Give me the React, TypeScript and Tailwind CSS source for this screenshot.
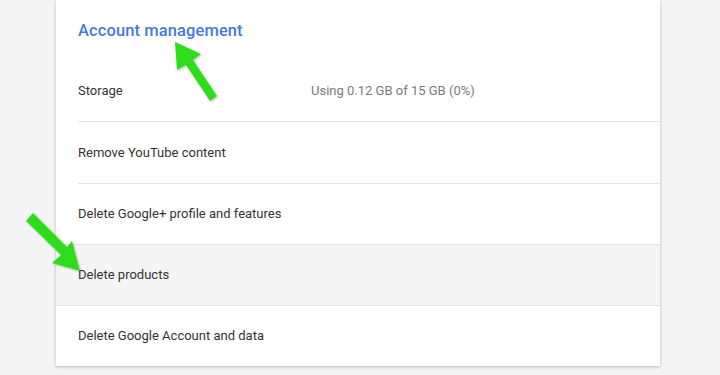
import React from "react";

export default function App() {
  const font = { fontFamily: "Roboto, 'Liberation Sans', Arial, sans-serif" };
  return (
    <div className="relative w-[720px] h-[375px] bg-[#f4f4f5] overflow-hidden" style={font}>
      <div className="ml-[56px] w-[604px] h-[366px] bg-white shadow-[0_1px_3px_rgba(0,0,0,0.25)] flex flex-col">
        <div className="h-[60px] flex items-center pl-[22px] pt-[3px]">
          <span className="text-[16.5px] font-medium text-[#4479dd] tracking-[0.1px]">Account management</span>
        </div>
        <div className="ml-[22px] h-[61px] flex items-center text-[13px]">
          <span className="w-[233px] text-[#333]">Storage</span>
          <span className="text-[#7a7a7a]">Using 0.12 GB of 15 GB (0%)</span>
        </div>
        <div className="ml-[22px] h-[62px] border-t border-[#e3e3e3] flex items-center text-[13px] text-[#333]">
          Remove YouTube content
        </div>
        <div className="ml-[22px] h-[61px] border-t border-[#e3e3e3] flex items-center text-[13px] text-[#333]">
          Delete Google+ profile and features
        </div>
        <div className="h-[62px] border-y border-[#e3e3e3] bg-[#f5f5f6] pl-[22px] flex items-center text-[13px] text-[#333]">
          Delete products
        </div>
        <div className="h-[60px] pl-[22px] flex items-center text-[13px] text-[#333]">
          Delete Google Account and data
        </div>
      </div>
      <svg className="absolute left-0 top-0 pointer-events-none" width="720" height="375">
        <defs>
          <filter id="sh" x="-20%" y="-20%" width="140%" height="140%">
            <feDropShadow dx="1" dy="1" stdDeviation="1" floodColor="#000" floodOpacity="0.25" />
          </filter>
        </defs>
        <polygon
          filter="url(#sh)"
          fill="#2fdc1c"
          points="175,42 201,54 193,60 217,96 210,101 186,65 177,70"
        />
        <polygon
          filter="url(#sh)"
          fill="#2fdc1c"
          points="80,271 52,263 61,255 26,221 33,213 67,247 72,241"
        />
      </svg>
    </div>
  );
}
